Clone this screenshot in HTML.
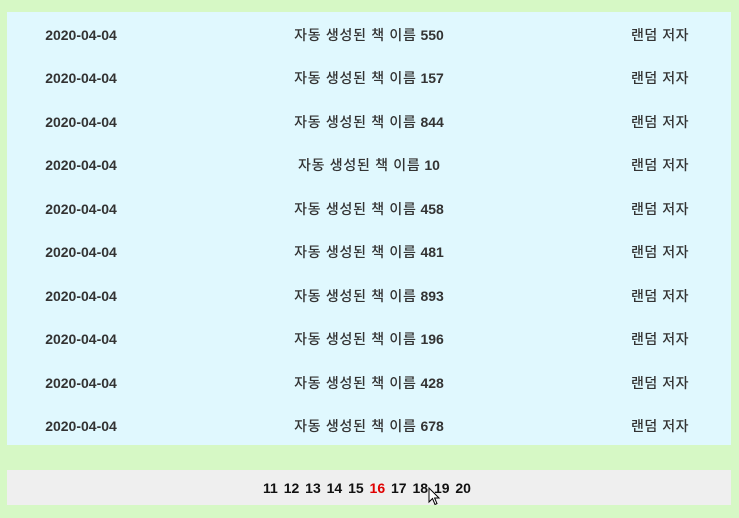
<!DOCTYPE html>
<html><head><meta charset="utf-8"><style>
html,body{margin:0;padding:0;background:#d6f8c5;width:739px;height:518px;overflow:hidden;font-family:"Liberation Sans","Noto Sans CJK KR",sans-serif;}
.box{position:absolute;left:7px;top:12px;width:724px;height:433px;background:#e0f8fe;}
.row{position:absolute;left:0;width:724px;height:20px;line-height:20px;font-size:14px;font-weight:bold;color:#333;}
.row span{position:absolute;top:0;height:20px;line-height:20px;white-space:nowrap;transform:translateX(-50%);}
.row i{font-style:normal;font-weight:500;letter-spacing:0.7px;}
.a{left:74px}.b{left:362px}.c{left:653px;font-weight:500;letter-spacing:0.5px}
.pg{position:absolute;left:7px;top:470px;width:724px;height:35px;background:#efefef;}
.pg div{position:absolute;left:256px;top:8px;line-height:20px;font-size:14px;font-weight:bold;color:#111;word-spacing:2px;white-space:nowrap}
.red{color:#e00000}
</style></head><body>
<div class="box">
<div class="row" style="top:13px"><span class="a">2020-04-04</span><span class="b"><i>자동 생성된 책 이름</i> 550</span><span class="c">랜덤 저자</span></div>
<div class="row" style="top:56px"><span class="a">2020-04-04</span><span class="b"><i>자동 생성된 책 이름</i> 157</span><span class="c">랜덤 저자</span></div>
<div class="row" style="top:100px"><span class="a">2020-04-04</span><span class="b"><i>자동 생성된 책 이름</i> 844</span><span class="c">랜덤 저자</span></div>
<div class="row" style="top:143px"><span class="a">2020-04-04</span><span class="b"><i>자동 생성된 책 이름</i> 10</span><span class="c">랜덤 저자</span></div>
<div class="row" style="top:187px"><span class="a">2020-04-04</span><span class="b"><i>자동 생성된 책 이름</i> 458</span><span class="c">랜덤 저자</span></div>
<div class="row" style="top:230px"><span class="a">2020-04-04</span><span class="b"><i>자동 생성된 책 이름</i> 481</span><span class="c">랜덤 저자</span></div>
<div class="row" style="top:274px"><span class="a">2020-04-04</span><span class="b"><i>자동 생성된 책 이름</i> 893</span><span class="c">랜덤 저자</span></div>
<div class="row" style="top:317px"><span class="a">2020-04-04</span><span class="b"><i>자동 생성된 책 이름</i> 196</span><span class="c">랜덤 저자</span></div>
<div class="row" style="top:361px"><span class="a">2020-04-04</span><span class="b"><i>자동 생성된 책 이름</i> 428</span><span class="c">랜덤 저자</span></div>
<div class="row" style="top:404px"><span class="a">2020-04-04</span><span class="b"><i>자동 생성된 책 이름</i> 678</span><span class="c">랜덤 저자</span></div>
</div>
<div class="pg"><div>11 12 13 14 15 <span class="red">16</span> 17 18 19 20</div></div>
<svg style="position:absolute;left:428px;top:487px" width="14" height="20" viewBox="0 0 14 20"><path d="M1 1 L1 15 L4.5 11.5 L7 17.5 L9 16.6 L6.6 11 L11 11 Z" fill="#fff" stroke="#000" stroke-width="1"/></svg>
</body></html>
